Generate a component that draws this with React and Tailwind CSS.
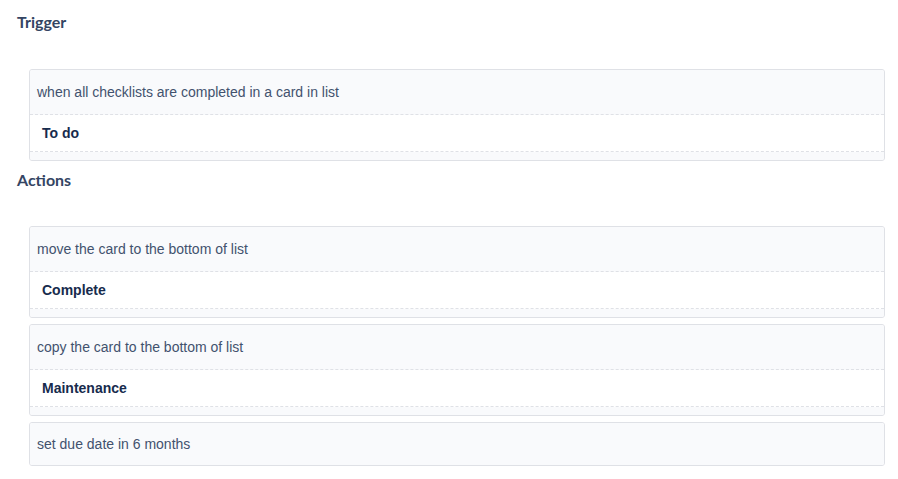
import React from "react";

const heading = "text-[16px] leading-[20px] font-bold text-[#344563]";
const headingFont = { fontFamily: "Lato, 'Noto Sans', sans-serif" };

function Card({ text, label }) {
  return (
    <div className="border border-[#dfe1e6] rounded-[3px] overflow-hidden bg-[#f9fafc]">
      <div
        className={`${label ? "h-[45px] border-b border-dashed border-[#dfe1e6]" : "h-[42px]"} flex items-center px-[7px] text-[14px] text-[#42526e] bg-[#f9fafc]`}
      >
        {text}
      </div>
      {label && (
        <>
          <div className="h-[37px] flex items-center px-[12px] text-[14px] font-bold text-[#172b4d] bg-white border-b border-dashed border-[#dfe1e6]">
            {label}
          </div>
          <div className="h-[8px] bg-[#f9fafc]" />
        </>
      )}
    </div>
  );
}

export default function App() {
  return (
    <div
      className="w-[898px] h-[479px] bg-white pt-[12px]"
      style={{ fontFamily: "'Liberation Sans', Arial, sans-serif" }}
    >
      <h2 className={`${heading} pl-[17px]`} style={headingFont}>Trigger</h2>
      <div className="mt-[37px] ml-[29px] w-[856px]">
        <Card text="when all checklists are completed in a card in list" label="To do" />
      </div>
      <h2 className={`${heading} pl-[17px] mt-[9px]`} style={headingFont}>Actions</h2>
      <div className="mt-[36px] ml-[29px] w-[856px] flex flex-col gap-[6px]">
        <Card text="move the card to the bottom of list" label="Complete" />
        <Card text="copy the card to the bottom of list" label="Maintenance" />
        <Card text="set due date in 6 months" />
      </div>
    </div>
  );
}
